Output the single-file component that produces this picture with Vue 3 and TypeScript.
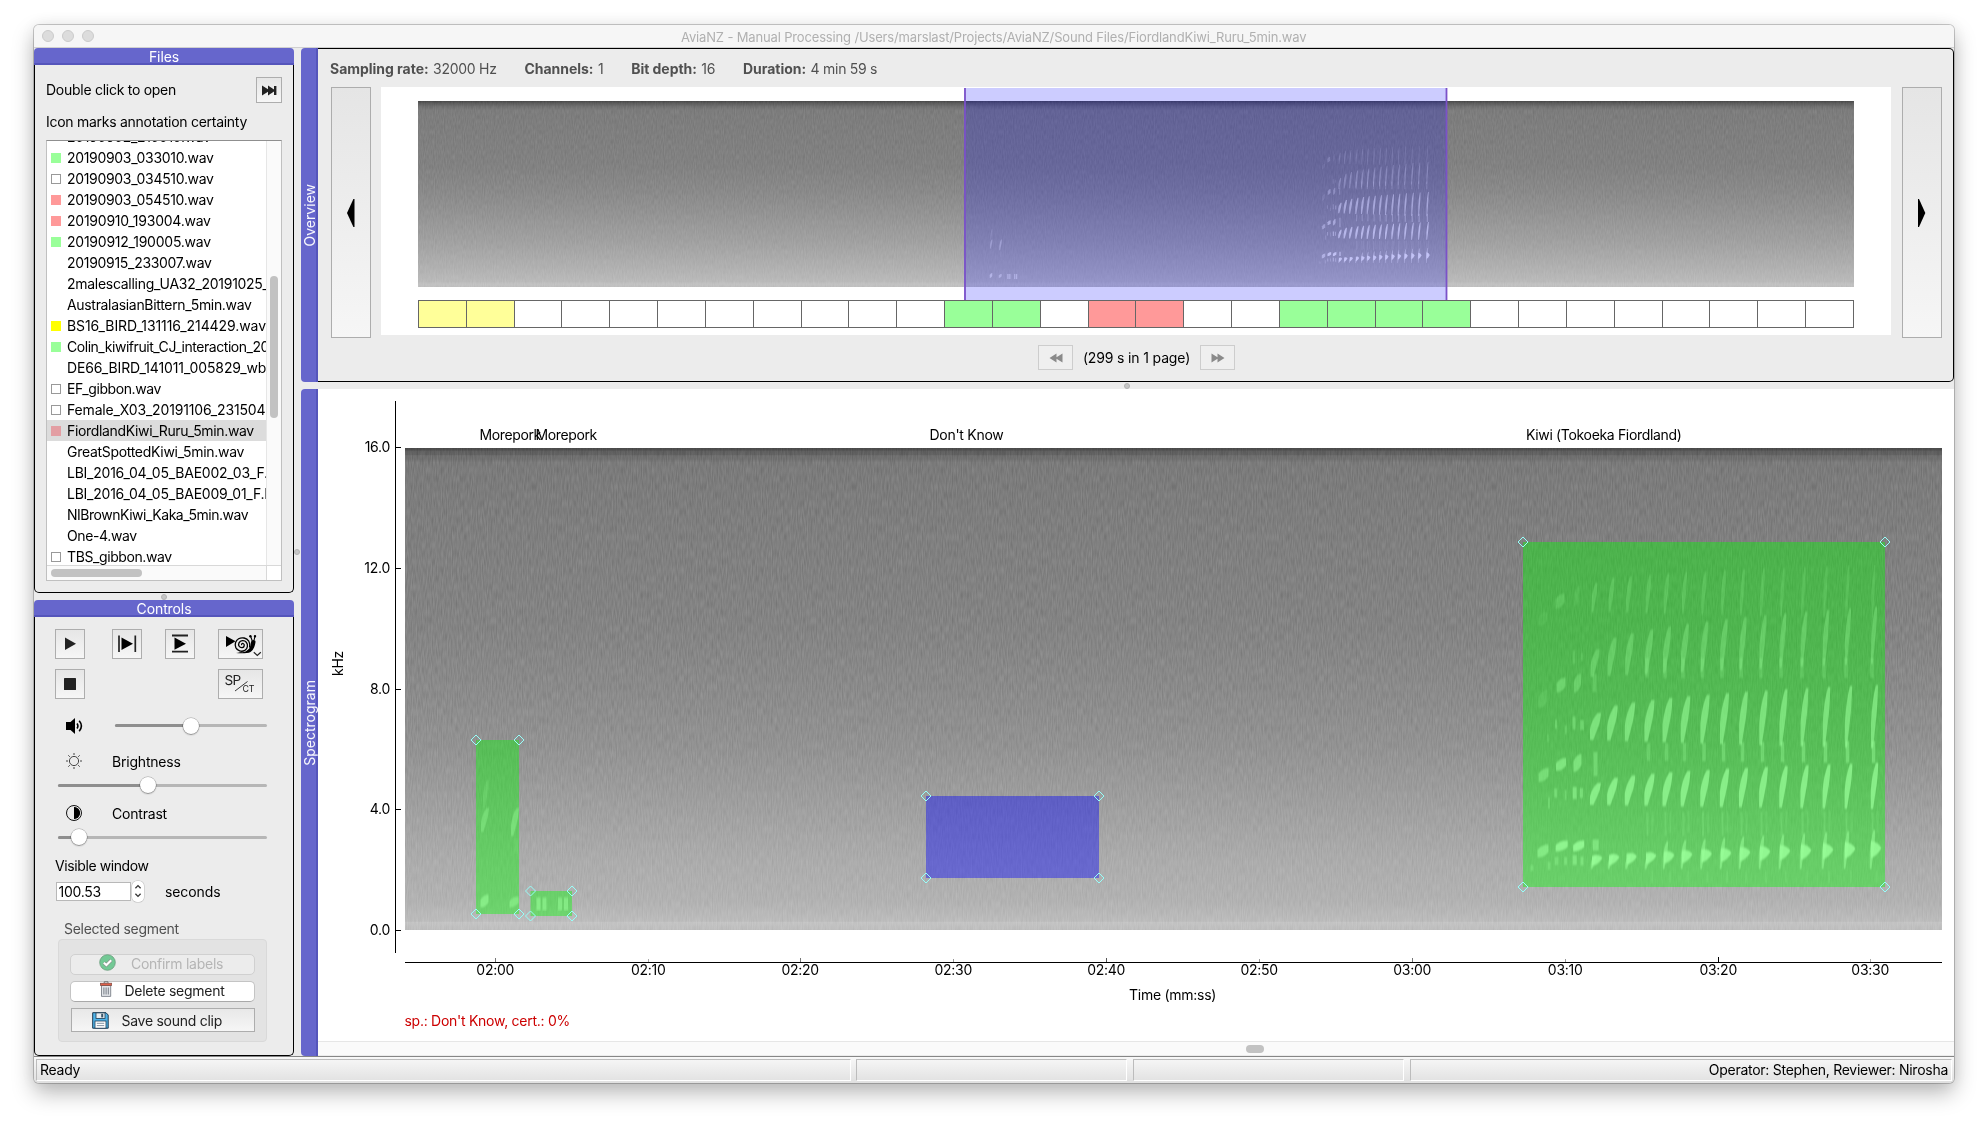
<script setup lang="ts">
type Mark = 'green' | 'empty' | 'red' | 'yellow' | 'none'
interface FileRow { name: string; mark: Mark; selected?: boolean; track?: number }

// track: letter spacing of a row in px, where it differs from the window's
const files: FileRow[] = [
  { name: '20190902_210010.wav', mark: 'none', track: -0.34 },
  { name: '20190903_033010.wav', mark: 'green', track: -0.32 },
  { name: '20190903_034510.wav', mark: 'empty', track: -0.32 },
  { name: '20190903_054510.wav', mark: 'red', track: -0.32 },
  { name: '20190910_193004.wav', mark: 'red', track: -0.24 },
  { name: '20190912_190005.wav', mark: 'green', track: -0.24 },
  { name: '20190915_233007.wav', mark: 'none' },
  { name: '2malescalling_UA32_20191025_2100.wav', mark: 'none', track: -0.28 },
  { name: 'AustralasianBittern_5min.wav', mark: 'none', track: -0.32 },
  { name: 'BS16_BIRD_131116_214429.wav', mark: 'yellow', track: -0.08 },
  { name: 'Colin_kiwifruit_CJ_interaction_2019.wav', mark: 'green', track: -0.46 },
  { name: 'DE66_BIRD_141011_005829_wb.wav', mark: 'none', track: -0.12 },
  { name: 'EF_gibbon.wav', mark: 'empty', track: -0.42 },
  { name: 'Female_X03_20191106_231504.wav', mark: 'empty', track: -0.16 },
  { name: 'FiordlandKiwi_Ruru_5min.wav', mark: 'red', selected: true, track: -0.34 },
  { name: 'GreatSpottedKiwi_5min.wav', mark: 'none' },
  { name: 'LBI_2016_04_05_BAE002_03_F.wav', mark: 'none', track: -0.24 },
  { name: 'LBI_2016_04_05_BAE009_01_F.F.wav', mark: 'none', track: -0.24 },
  { name: 'NIBrownKiwi_Kaka_5min.wav', mark: 'none', track: -0.48 },
  { name: 'One-4.wav', mark: 'none', track: -0.38 },
  { name: 'TBS_gibbon.wav', mark: 'empty', track: -0.4 },
]

const meta = [
  { key: 'Sampling rate:', value: '32000 Hz' },
  { key: 'Channels:', value: '1' },
  { key: 'Bit depth:', value: '16' },
  { key: 'Duration:', value: '4 min 59 s' },
]

// Certainty of each ten-second block in the overview strip
const blockColour: Record<number, string> = {
  0: '#ffff99', 1: '#ffff99', 11: '#99ff99', 12: '#99ff99', 14: '#ff9999', 15: '#ff9999',
  18: '#99ff99', 19: '#99ff99', 20: '#99ff99', 21: '#99ff99',
}
const blockEdge = (i: number) => Math.round(418 + i * 47.83)
const blocks = Array.from({ length: 30 }, (_, i) => ({
  x: blockEdge(i) + 0.5,
  w: blockEdge(i + 1) - blockEdge(i),
  fill: blockColour[i] ?? '#fff',
}))

const freqTicks = [
  { y: 447.5, label: '16.0' }, { y: 568.5, label: '12.0' }, { y: 689.5, label: '8.0' },
  { y: 809.5, label: '4.0' }, { y: 930.5, label: '0.0' },
]
const timeTicks = [
  ['02:00', 4, '#777'], ['02:10', 3, '#aaa'], ['02:20', 4, '#777'], ['02:30', 3, '#999'], ['02:40', 4, '#555'],
  ['02:50', 3, '#999'], ['03:00', 4, '#777'], ['03:10', 3, '#999'], ['03:20', 5, '#000'], ['03:30', 3, '#aaa'],
].map(([label, h, c], i) => ({ label: label as string, h: h as number, c: c as string, x: Math.floor(495.2 + i * 152.85) + 0.5 }))

const segments = [
  { name: 'Morepork', tx: 479.5, len: 61.5, x: 476, y: 740, w: 43, h: 174, fill: '#00ff00' },
  { name: 'Morepork', tx: 535.5, len: 61.5, x: 530.5, y: 891, w: 41.5, h: 25, fill: '#00ff00' },
  { name: "Don't Know", tx: 929.5, len: 74, x: 926, y: 796, w: 173, h: 82, fill: '#0000ff' },
  { name: 'Kiwi (Tokoeka Fiordland)', tx: 1526, len: 155.5, x: 1523, y: 542, w: 362, h: 345, fill: '#00ff00' },
]
const corners = (s: { x: number; y: number; w: number; h: number }) =>
  [[s.x, s.y], [s.x + s.w, s.y], [s.x, s.y + s.h], [s.x + s.w, s.y + s.h]]
    .map(([x, y]) => `M${x - 5} ${y}L${x} ${y - 5}L${x + 5} ${y}L${x} ${y + 5}Z`).join('')

interface Stroke { d: string; o: number }
// A swept note: upright narrow foot, fuller shoulder leaning right
const sliver = (x: number, y1: number, y2: number, w: number, o: number): Stroke => {
  const h = y2 - y1
  const l = x - w / 2
  const r = x + w / 2
  return {
    d: `M${l} ${y2}L${l} ${y1 + 0.6 * h}Q${l + 0.15 * w} ${y1 + 0.25 * h} ${r - 0.3 * w} ${y1}L${r} ${y1}Q${r - 0.05 * w} ${y1 + 0.35 * h} ${r - 0.35 * w} ${y1 + 0.62 * h}L${l + 0.3 * w} ${y2}Z`,
    o,
  }
}
const blob = (x: number, y: number, w: number, h: number, o: number): Stroke => ({
  d: `M${x - w / 2} ${y + h / 2}L${x - w / 2} ${y - h * 0.1}Q${x - w * 0.1} ${y - h / 2} ${x + w / 2} ${y - h / 2}L${x + w / 2} ${y + h * 0.1}Q${x + w * 0.1} ${y + h / 2} ${x - w / 2} ${y + h / 2}Z`,
  o,
})
const bar = (x: number, y: number, w: number, h: number, o: number): Stroke => ({ d: `M${x - w / 2} ${y - h / 2}h${w}v${h}h${-w}Z`, o })

const syllables = [1595, 1612, 1629.5, 1649, 1667, 1685, 1704.5, 1724, 1743, 1763, 1783, 1804, 1826, 1848, 1874]
const strokes: Stroke[] = []
syllables.forEach((x, i) => {
  const p = i / (syllables.length - 1)
  const at = (a: number, b: number) => a + (b - a) * p
  const q = Math.sqrt(p)
  // fundamental
  strokes.push({ d: `M${x - 3} ${at(856, 841)}Q${x + 4} ${at(853, 842)} ${x + 7.5} ${at(858, 848)}Q${x + 3} ${at(865, 856)} ${x - 3} ${at(866, 858)}Z`, o: 0.85 })
  strokes.push(sliver(x - 1.5, i < 4 ? 855 : at(846, 830), 869, 5.5, 0.55))
  // harmonics
  strokes.push(sliver(x + 0.5, 783 - 20 * q, at(805, 809), at(11, 7.5), 0.72))
  strokes.push(sliver(x + 0.5, 713 - 28 * q, at(740, 748), at(11, 7), 0.58))
  strokes.push(sliver(x, 649 - 42 * q, at(677, 664), at(9, 6), 0.32))
  strokes.push(sliver(x - 0.5, 583 - 18 * q, at(612, 618), at(6, 4), at(0.24, 0.16)))
  if (i > 2) {
    strokes.push(bar(x - 0.5, 752, 3.5, at(16, 22), at(0.22, 0.45)))
    strokes.push(bar(x - 1.5, 824, 2, 24, 0.2))
    strokes.push(bar(x + 3.5, 822, 2, 22, 0.13))
    strokes.push(bar(x + 3, 877, 1.6, 12, 0.16))
    strokes.push(bar(x - 2, at(668, 668), 3.5, 20, 0.22))
  }
})
strokes.push(
  blob(1543.5, 775, 10, 14, 0.45), blob(1561, 764.5, 10, 13, 0.6), blob(1577.5, 763, 8, 18, 0.55), bar(1595.5, 764, 4, 24, 0.38),
  blob(1543, 851, 11, 13, 0.6), blob(1561.7, 846, 12, 11, 0.8), blob(1578.7, 846, 11, 11, 0.85), bar(1595.7, 845, 6, 11, 0.5),
  bar(1555.7, 793, 3, 9, 0.4), bar(1565.6, 795, 2, 10, 0.3), bar(1574.7, 793, 4, 12, 0.55), bar(1581.4, 793, 3, 10, 0.45),
  bar(1556.5, 861, 4, 8, 0.35), bar(1565.6, 861, 3, 8, 0.35), bar(1574.7, 860, 4, 10, 0.5), bar(1582, 861, 3, 9, 0.45),
  bar(1549, 803, 2, 11, 0.3), bar(1549, 866, 3, 8, 0.3), bar(1532, 868, 3, 6, 0.3),
  blob(1561, 685, 9, 15, 0.4), blob(1577.5, 683, 7, 19, 0.34), blob(1543, 699, 9, 18, 0.15), bar(1594.5, 683, 4, 18, 0.22),
  blob(1560, 601, 9, 15, 0.24), blob(1577, 596, 5, 20, 0.12), blob(1543, 619, 9, 14, 0.1),
  bar(1556, 724, 2, 9, 0.35), bar(1565.7, 730, 2, 9, 0.25), bar(1574, 723, 3, 13, 0.38), bar(1582, 725, 3.5, 10, 0.38),
  bar(1574, 657, 2.5, 13, 0.18), bar(1582, 657, 2.5, 8, 0.15), bar(1548, 738, 1.5, 8, 0.25),
)
// Morepork calls
strokes.push(
  sliver(485, 808, 832, 8, 0.38), sliver(486, 780, 808, 6, 0.18), sliver(515, 808, 836, 8, 0.42), bar(516, 846, 4, 14, 0.1),
  blob(484.5, 901, 8, 13, 0.6), blob(514, 902, 9, 11, 0.5),
  bar(538.5, 904, 4, 13, 0.6), bar(544.5, 904, 4, 13, 0.55), bar(560, 904, 4, 13, 0.5), bar(566, 904, 4, 13, 0.55),
)
</script>

<template>
  <div class="desktop">
    <div class="window">
      <header class="titlebar">
        <span class="lights"><i /><i /><i /></span>
        <span class="title">AviaNZ - Manual Processing /Users/marslast/Projects/AviaNZ/Sound Files/FiordlandKiwi_Ruru_5min.wav</span>
      </header>

      <div class="main">
        <div class="side">
          <section class="dock files">
            <h2 class="dock-title">Files</h2>
            <div class="dock-body">
              <div class="open-row">
                <span>Double click to open</span>
                <button class="tool ff">
                  <svg width="15" height="11" viewBox="0 0 15 11"><path d="M0 .5L6 4.3V.5L12 4.6V1H14.4V10H12V6.4L6 10.5V6.7L0 10.5Z" fill="#222" /></svg>
                </button>
              </div>
              <p class="hint">Icon marks annotation certainty</p>
              <div class="list">
                <div class="rows">
                  <div v-for="f in files" :key="f.name" class="row" :class="{ selected: f.selected }">
                    <i class="mark" :class="f.mark" />
                    <span :style="{ letterSpacing: `${f.track ?? -0.3}px` }">{{ f.name }}</span>
                  </div>
                </div>
                <div class="vbar"><i /></div>
                <div class="hbar"><i /></div>
                <div class="corner" />
              </div>
            </div>
          </section>

          <div class="split"><i /></div>

          <section class="dock controls">
            <h2 class="dock-title">Controls</h2>
            <div class="dock-body">
              <div class="buttons">
                <button class="tool b1"><svg width="28" height="28" viewBox="0 0 28 28"><path d="M9 7.5L20 13.7L9 20Z" fill="#222" /></svg></button>
                <button class="tool b2"><svg width="28" height="28" viewBox="0 0 28 28"><path d="M6 5.5V22M22.3 5.5V22" stroke="#222" stroke-width="1.7" /><path d="M8.5 7.5L20 13.7L8.5 20Z" /></svg></button>
                <button class="tool b3"><svg width="28" height="28" viewBox="0 0 28 28"><path d="M6 5.5H22M6 21.7H22" stroke="#222" stroke-width="1.8" /><path d="M8.5 7.5L20 13.7L8.5 19.8Z" /></svg></button>
                <button class="tool b4">
                  <svg width="43" height="28" viewBox="0 0 43 28">
                    <path d="M7 6L16.5 11.3L7 17Z" />
                    <path d="M17 22.9C22 22.6 29 20.5 30.6 18C32 15.6 31.4 12.6 32.5 10.8C33.6 9.4 36.8 9.8 36.5 12C36.2 14.6 35 20 31.5 21.9C28.4 23.6 21 23.5 17 22.9Z" />
                    <path d="M33.2 10.8L31.6 6.2M35 10.5L36 6.2" stroke="#000" stroke-width="1.1" />
                    <circle cx="31.4" cy="6.2" r="1.2" /><circle cx="36" cy="6.2" r="1.2" />
                    <circle cx="23.3" cy="14.8" r="7.4" fill="#ececec" />
                    <path d="M22.9 15C22.2 14.4 22.9 13 24.2 13.5C26 14.3 25.4 17.3 23.2 17.6C20.4 17.9 18.9 15.2 20 12.9C21.4 10.2 25.3 9.9 27.3 12.2C29.3 14.6 28.7 18.6 25.8 20.4C22.6 22.2 18.4 20.9 16.8 17.6C15.4 14.3 16.6 10.4 19.6 8.7C23 6.9 27.6 7.8 29.8 11.2C31 13.4 31.2 15.6 30.6 17.6" fill="none" stroke="#000" stroke-width="1.3" />
                    <path d="M34.8 22.3L38.3 25.5L41.8 22.3" fill="none" stroke="#222" stroke-width="1.2" />
                  </svg>
                </button>
                <button class="tool b5"><svg width="28" height="28" viewBox="0 0 28 28"><rect x="8" y="8" width="12" height="12" rx=".6" fill="#222" /></svg></button>
                <button class="tool b6">
                  <svg width="43" height="28" viewBox="0 0 43 28">
                    <text x="5.6" y="15.4" font-size="13.6" fill="#222" textLength="16.4">SP</text>
                    <path d="M16 21L28.5 11.5" stroke="#222" stroke-width=".9" />
                    <text x="23.6" y="22.3" font-size="8.8" fill="#222" textLength="11.6">CT</text>
                  </svg>
                </button>
              </div>

              <div class="volume">
                <svg width="17" height="18" viewBox="0 0 17 18"><path d="M0 5H4.5L9 1V17L4.5 13H0Z" /><path d="M11 6.6Q12.8 9 11 11.4M13.2 3.8Q17.6 9 13.2 14.2" fill="none" stroke="#000" stroke-width="1.6" /></svg>
                <div class="slider vol"><b /><i /></div>
              </div>
              <div class="named">
                <svg width="18" height="18" viewBox="0 0 18 18" fill="none" stroke="#444" stroke-width="1"><circle cx="9" cy="9" r="4.6" /><path d="M9 1V3M9 15V17M1 9H3M15 9H17M3.3 3.3L4.8 4.8M13.2 13.2L14.7 14.7M3.3 14.7L4.8 13.2M13.2 4.8L14.7 3.3" /></svg>
                <span>Brightness</span>
              </div>
              <div class="slider bri"><b /><i /></div>
              <div class="named con-name">
                <svg width="18" height="18" viewBox="0 0 18 18"><circle cx="9" cy="9" r="7.5" fill="none" stroke="#111" stroke-width="1" /><path d="M9 3.2A5.8 5.8 0 0 1 9 14.8Z" /><path d="M9 2.9A6.1 6.1 0 0 1 9 15.1Z" /></svg>
                <span>Contrast</span>
              </div>
              <div class="slider con"><b /><i /></div>

              <p class="vis">Visible window</p>
              <div class="spin-row">
                <span class="spin-input">100.53</span>
                <span class="spinner"><svg width="12" height="20" viewBox="0 0 12 20" fill="none" stroke="#333" stroke-width="1.3"><path d="M3.4 7.2L6 4.6L8.6 7.2M3.4 12.8L6 15.4L8.6 12.8" /></svg></span>
                <span class="unit">seconds</span>
              </div>

              <p class="group-name">Selected segment</p>
              <div class="group">
                <button class="pill off">
                  <svg width="17" height="17" viewBox="0 0 17 17"><circle cx="8.5" cy="8.5" r="7.8" fill="#73c995" stroke="#6a9c7c" stroke-width=".8" /><path d="M4.8 8.7L7.4 11L12.2 6.2" fill="none" stroke="#8a8f8c" stroke-width="3.4" /><path d="M4.8 8.7L7.4 11L12.2 6.2" fill="none" stroke="#fff" stroke-width="2.1" /></svg>
                  <span>Confirm labels</span>
                </button>
                <button class="pill del">
                  <svg width="12" height="17" viewBox="0 0 12 17"><path d="M1.5 4.5H10.7V15.4H1.5Z" fill="#e3e6ea" stroke="#7b8088" stroke-width=".9" /><path d="M3.9 6.5V13.5M6.1 6.5V13.5M8.3 6.5V13.5" stroke="#777d86" stroke-width="1" /><rect x=".4" y="2.2" width="11.4" height="2.3" fill="#e0604a" stroke="#7a4a42" stroke-width=".7" /><path d="M4.2 2V.8H8V2" fill="none" stroke="#666" stroke-width=".9" /></svg>
                  <span>Delete segment</span>
                </button>
                <button class="flat">
                  <svg width="17" height="17" viewBox="0 0 17 17"><path d="M.7 .7H14L16.2 3V16.2H.7Z" fill="#4fb4ea" stroke="#1d3a52" stroke-width="1" /><rect x="4" y=".9" width="9" height="5.6" fill="#e8eef2" stroke="#1d3a52" stroke-width=".8" /><rect x="9.2" y="1.8" width="2" height="3.6" fill="#3a5468" /><rect x="3" y="9" width="11" height="7.2" fill="#fff" stroke="#1d3a52" stroke-width=".8" /><path d="M4.8 11.3H12.2M4.8 13.6H12.2" stroke="#789" stroke-width=".9" /></svg>
                  <span>Save sound clip</span>
                </button>
              </div>
            </div>
          </section>
        </div>

        <div class="vsplit"><i /></div>

        <div class="content">
          <section class="pane overview">
            <div class="tab"><span>Overview</span></div>
            <div class="pane-body">
              <div class="meta">
                <span v-for="m in meta" :key="m.key"><b>{{ m.key }}</b> {{ m.value }}</span>
              </div>
              <div class="strip">
                <button class="side-btn"><svg width="8" height="28" viewBox="0 0 8 28"><path d="M7.5 0V28H6.4L0 14L6.4 0Z" /></svg></button>
                <svg class="over-plot" width="1510" height="248" viewBox="381 87 1510 248">
                  <defs>
                    <linearGradient id="ovg" x1="0" y1="0" x2="0" y2="1">
                      <stop offset="0" stop-color="#474747" /><stop offset=".012" stop-color="#5c5c5c" /><stop offset=".03" stop-color="#707070" />
                      <stop offset=".05" stop-color="#7c7c7c" /><stop offset=".35" stop-color="#818181" /><stop offset=".5" stop-color="#8a8a8a" />
                      <stop offset=".75" stop-color="#a0a0a0" /><stop offset=".9" stop-color="#b1b1b1" /><stop offset=".97" stop-color="#bababa" /><stop offset=".985" stop-color="#c2c2c2" /><stop offset="1" stop-color="#bfbfbf" />
                    </linearGradient>
                    <filter id="ovn" x="0" y="0" width="100%" height="100%" color-interpolation-filters="sRGB">
                      <feTurbulence type="fractalNoise" baseFrequency=".9 .2" numOctaves="1" seed="4" />
                      <feColorMatrix values="1 0 0 0 0  1 0 0 0 0  1 0 0 0 0  0 0 0 0 1" />
                    </filter>
                  </defs>
                  <rect x="418" y="101" width="1436" height="186" fill="url(#ovg)" />
                  <rect class="noise faint" x="418" y="101" width="1436" height="186" filter="url(#ovn)" />
                  <g transform="translate(838.8 -72.4) scale(.3141 .386)">
                    <path v-for="(s, i) in strokes" :key="i" :d="s.d" fill="#fff" :opacity="s.o" />
                  </g>
                  <rect x="964" y="88" width="483" height="212" fill="#0000ff" fill-opacity=".2" />
                  <path d="M965 88V300M1446.5 88V300" stroke="#7b52c8" stroke-width="1.8" />
                  <g stroke="#666">
                    <rect v-for="b in blocks" :key="b.x" :x="b.x" y="300.5" :width="b.w" height="27" :fill="b.fill" />
                  </g>
                </svg>
                <button class="side-btn right"><svg width="8" height="28" viewBox="0 0 8 28"><path d="M0 0H1L7.3 14L1 28H0Z" /></svg></button>
              </div>
              <div class="pager">
                <button class="tool page"><svg width="14" height="10" viewBox="0 0 14 10"><path d="M13.5 .5V9.5L7.5 5.8V9.5L.5 5L7.5 .5V4.2Z" fill="#8a8a8a" /></svg></button>
                <span>(299 s in 1 page)</span>
                <button class="tool page"><svg width="14" height="10" viewBox="0 0 14 10"><path d="M.5 .5V9.5L6.5 5.8V9.5L13.5 5L6.5 .5V4.2Z" fill="#8a8a8a" /></svg></button>
              </div>
            </div>
          </section>

          <div class="split wide"><i /></div>

          <section class="pane spectro">
            <div class="tab"><span>Spectrogram</span></div>
            <div class="spec-body">
              <svg class="spec-plot" width="1635" height="652" viewBox="318 389 1635 652">
                <defs>
                  <linearGradient id="spg" x1="0" y1="0" x2="0" y2="1">
                    <stop offset="0" stop-color="#4a4a4a" /><stop offset=".004" stop-color="#4e4e4e" /><stop offset=".0065" stop-color="#5e5e5e" /><stop offset=".014" stop-color="#626262" />
                    <stop offset=".016" stop-color="#6e6e6e" /><stop offset=".023" stop-color="#707070" /><stop offset=".03" stop-color="#7a7a7a" /><stop offset=".2" stop-color="#7f7f7f" />
                    <stop offset=".37" stop-color="#838383" /><stop offset=".5" stop-color="#8a8a8a" /><stop offset=".62" stop-color="#929292" /><stop offset=".75" stop-color="#a0a0a0" />
                    <stop offset=".86" stop-color="#acacac" /><stop offset=".94" stop-color="#b2b2b2" /><stop offset=".982" stop-color="#bcbcbc" /><stop offset=".984" stop-color="#c4c4c4" /><stop offset="1" stop-color="#bebebe" />
                  </linearGradient>
                  <filter id="spn" x="0" y="0" width="100%" height="100%" color-interpolation-filters="sRGB">
                    <feTurbulence type="fractalNoise" baseFrequency=".8 .12" numOctaves="1" seed="9" />
                    <feColorMatrix values="1 0 0 0 0  1 0 0 0 0  1 0 0 0 0  0 0 0 0 1" />
                  </filter>
                  <filter id="soft" x="0" y="0" width="100%" height="100%"><feGaussianBlur stdDeviation=".5 1" /></filter>
                </defs>
                <rect x="405" y="448" width="1537" height="482" fill="url(#spg)" />
                <rect class="noise" x="405" y="448" width="1537" height="482" filter="url(#spn)" />
                <g filter="url(#soft)">
                  <path v-for="(s, i) in strokes" :key="i" :d="s.d" fill="#fff" :opacity="s.o" />
                </g>
                <g v-for="s in segments" :key="s.x">
                  <rect :x="s.x" :y="s.y" :width="s.w" :height="s.h" :fill="s.fill" fill-opacity=".4" />
                  <path :d="corners(s)" fill="none" stroke="#96fffa" stroke-width="1" />
                  <text :x="s.tx" y="440" :textLength="s.len">{{ s.name }}</text>
                </g>
                <path d="M395.5 401V953M405 962.5H1942" stroke="#000" />
                <g v-for="t in freqTicks" :key="t.label">
                  <path :d="`M395 ${t.y}H401`" stroke="#000" />
                  <text x="390" :y="t.y + 4.7" text-anchor="end">{{ t.label }}</text>
                </g>
                <g v-for="t in timeTicks" :key="t.label">
                  <path :d="`M${t.x} 962V${962 - t.h}`" :stroke="t.c" />
                  <text :x="t.x - 0.3" y="975" text-anchor="middle">{{ t.label }}</text>
                </g>
                <text x="1129" y="1000">Time (mm:ss)</text>
                <text transform="translate(342.7 676) rotate(-90)">kHz</text>
                <text x="404.5" y="1026" class="status-text">sp.: Don't Know, cert.: 0%</text>
              </svg>
              <div class="scroll"><i /></div>
            </div>
          </section>
        </div>
      </div>

      <footer class="status">
        <span class="cell c1">Ready</span>
        <span class="cell c2" />
        <span class="cell c3" />
        <span class="cell c4">Operator: Stephen, Reviewer: Nirosha</span>
      </footer>
    </div>
  </div>
</template>

<style>
body { margin: 0; background: #fff; }
</style>

<style scoped>
.desktop, .desktop * { box-sizing: border-box; }
.desktop {
  width: 1988px; height: 1125px; padding: 25px 0 0 34px; overflow: hidden; background: #fff;
  font: 14px/18px Inter, "Open Sans", sans-serif; letter-spacing: -0.27px; color: #000;
}
.window {
  width: 1920px; height: 1058px; display: flex; flex-direction: column; background: #ececec; border-radius: 5px;
  box-shadow: 0 0 0 1px rgba(0, 0, 0, .2), 0 10px 22px rgba(0, 0, 0, .28), 0 0 16px rgba(0, 0, 0, .06); overflow: hidden;
}
h2, p { margin: 0; font-weight: 400; font-size: inherit; }
button { font: inherit; letter-spacing: inherit; color: inherit; padding: 0; margin: 0; }
svg { display: block; flex: none; }
svg text { font-family: Inter, "Open Sans", sans-serif; }

.titlebar { height: 23px; display: flex; align-items: center; background: #f6f6f6; border-bottom: 1px solid #d0d0d0; flex: none; }
.lights { display: flex; gap: 8px; padding-left: 8px; width: 647px; }
.lights i { width: 12px; height: 12px; border-radius: 50%; background: #dcdcdc; border: 1px solid #cacaca; }
.title { font-size: 13px; line-height: 22px; letter-spacing: -0.155px; color: #b0b0b0; white-space: nowrap; padding-top: 2px; }

.main { display: flex; height: 1008px; flex: none; }
.side { width: 260px; display: flex; flex-direction: column; }
.dock { display: flex; flex-direction: column; }
.files { height: 545px; }
.controls { height: 456px; }
.dock-title { height: 17px; line-height: 17px; text-align: center; color: #fff; background: #6666cc; border-bottom: 2px solid #5555bb; border-radius: 4px 4px 0 0; letter-spacing: -0.1px; }
.dock-body { flex: 1; border: 1px solid #000; border-top: 0; border-radius: 0 0 5px 5px; background: #ececec; }
.split { height: 7px; display: flex; justify-content: center; align-items: center; }
.split i, .vsplit i { width: 6px; height: 6px; border-radius: 50%; background: #c6c6c6; border: 1px solid #b2b2b2; }
.split.wide { padding-right: 2px; }
.vsplit { width: 7px; display: flex; align-items: center; }

.open-row { display: flex; justify-content: space-between; align-items: center; height: 26px; margin: 12px 11px 0; }
.tool { display: flex; align-items: center; justify-content: center; width: 30px; height: 30px; border: 1px solid #adadad; background: linear-gradient(#e6e6e6, #f6f6f6); }
.tool.ff { width: 26px; height: 26px; }
.hint { margin: 10px 11px 0; height: 18px; line-height: 18px; white-space: nowrap; }
.list {
  margin: 9px 11px 0; width: 236px; height: 441px; border: 1px solid #c0c0c0; border-top-color: #8f8f8f; background: #fff;
  display: grid; grid-template: 424px 15px / 219px 15px;
}
.rows { overflow: hidden; }
.row { height: 21px; display: flex; align-items: center; white-space: nowrap; padding-left: 4px; }
.row:first-child { margin-top: -15px; }
.row.selected { background: #dcdcdc; }
.row span { padding-left: 6px; padding-top: 1px; }
.mark { width: 10px; height: 10px; flex: none; }
.green { background: #99ff99; }
.red { background: #ff9999; }
.selected .red { background: #e39ea3; }
.yellow { background: #ffff00; }
.empty { border: 1px solid #999; }
.vbar { border-left: 1px solid #e6e6e6; background: #fafafa; padding: 135px 0 0 3px; }
.vbar i { display: block; width: 8px; height: 142px; border-radius: 4px; background: #c2c2c2; }
.hbar { border-top: 1px solid #d8d8d8; background: #fafafa; padding: 3px 0 0 4px; }
.hbar i { display: block; width: 91px; height: 8px; border-radius: 4px; background: #c2c2c2; }
.corner { border: 1px solid #d8d8d8; border-right: 0; border-bottom: 0; background: #fff; }

.buttons { display: grid; grid-template-columns: 57px 53px 53px 45px; row-gap: 10px; margin: 12px 0 0 20px; }
.tool.b4, .tool.b6 { width: 45px; }
.b6 { grid-column: 4; }
.volume { display: flex; align-items: center; height: 18px; margin: 18px 0 0 30.5px; }
.slider { position: relative; height: 18px; margin-left: 23px; width: 209px; display: flex; align-items: center; }
.slider::before { content: ""; flex: 1; height: 3px; border-radius: 2px; background: #b6b6b6; }
.slider b { position: absolute; left: 0; top: 7.5px; height: 3px; border-radius: 2px; background: #8e8e8e; }
.slider i { position: absolute; top: 1px; width: 16px; height: 16px; border-radius: 50%; background: #fff; box-shadow: 0 0 0 .5px rgba(0, 0, 0, .3), 0 1px 1.5px rgba(0, 0, 0, .3); }
.vol { width: 152px; margin-left: 32.5px; margin-top: -1px; }
.vol b { width: 75px; }
.vol i { left: 68px; }
.bri b { width: 90px; }
.bri i { left: 82px; }
.con b { width: 20px; }
.con i { left: 13px; }
.named { display: flex; align-items: center; height: 18px; margin: 17px 0 0 30px; }
.named span { margin-left: 29px; padding-top: 2px; letter-spacing: -0.2px; }
.bri { margin-top: 6px; }
.con-name { margin-top: 10px; }
.con { margin-top: 6px; }
.vis { margin: 10px 0 0 20px; line-height: 18px; padding-top: 1px; letter-spacing: -0.4px; }
.spin-row { display: flex; align-items: center; height: 21px; margin: 6px 0 0 21px; }
.spin-input { width: 75px; height: 19px; border: 1px solid #b8b8b8; background: #fff; padding-left: 1.5px; line-height: 18px; }
.spinner { width: 12px; height: 21px; margin-left: 1px; border-radius: 5px; background: #fff; box-shadow: 0 0 0 .5px #bbb; }
.unit { margin-left: 21px; letter-spacing: -0.1px; }
.group-name { margin: 18px 0 0 29px; color: #505050; line-height: 18px; height: 18px; }
.group { margin: 1px 0 0 23px; width: 209px; height: 103px; background: #e3e3e3; border: 1px solid #d9d9d9; border-radius: 4px; padding: 14px 0 0 11px; }
.group button { display: flex; width: 185px; color: #222; }
.pill { height: 21px; border: 1px solid #c4c4c4; border-bottom-color: #a9a9a9; border-radius: 5px; background: #fff; margin-bottom: 6px; line-height: 17px; }
.pill.off { background: #ececec; border-color: #d0d0d0; }
.pill.off span { color: #b5b5b5; margin-left: 15px; }
.pill.off svg { margin: -1.5px 0 0 28px; }
.del svg { margin: -1px 0 0 28.5px; }
.del span { margin-left: 13px; }
.group .flat { height: 24px; width: 184px; margin-left: .5px; border: 1px solid #adadad; background: linear-gradient(#e8e8e8, #f6f6f6); line-height: 24px; }
.flat svg { margin: 3px 0 0 20.5px; }
.flat span { margin-left: 12.5px; }

.content { width: 1653px; display: flex; flex-direction: column; }
.pane { display: flex; }
.overview { height: 334px; }
.spectro { height: 667px; }
.tab { width: 17px; flex: none; background: #6666cc; border-right: 2px solid #5555bb; border-radius: 4px 0 0 4px; display: flex; align-items: center; justify-content: center; }
.tab span { writing-mode: vertical-rl; transform: rotate(180deg); color: #fff; line-height: 15px; letter-spacing: 0; padding-right: 2px; opacity: .95; }
.pane-body { flex: 1; border: 1px solid #000; border-left: 0; border-radius: 0 5px 5px 0; background: #ececec; }
.meta { display: flex; gap: 27.8px; height: 38px; align-items: center; padding: 1px 0 0 12px; color: #505050; }
.meta b { letter-spacing: -0.03px; margin-right: .8px; font-weight: 700; }
.strip { display: flex; height: 251px; padding-left: 13px; }
.side-btn { width: 40px; height: 251px; border: 1px solid #adadad; background: linear-gradient(#e5e5e5, #f6f6f6); display: flex; align-items: center; justify-content: center; }
.over-plot { background: #fff; margin: 0 11px 0 10px; }
.noise { mix-blend-mode: overlay; opacity: .15; }
.faint { opacity: .1; }
.pager { display: flex; align-items: center; height: 25px; margin: 7px 0 0 720px; }
.pager span { width: 127px; text-align: center; letter-spacing: -0.15px; }
.tool.page { width: 35px; height: 25px; border-color: #cdcdcd; background: #efefef; }

.spec-body { flex: 1; background: #fff; display: flex; flex-direction: column; }
.spec-plot { letter-spacing: -0.27px; font-size: 14px; }
.status-text { fill: #cc0000; }
.scroll { height: 15px; border-top: 1px solid #e6e6e6; border-bottom: 1px solid #ececec; background: #fafafa; padding: 3px 0 0 928px; }
.scroll i { display: block; width: 18px; height: 8px; border-radius: 4px; background: #c2c2c2; }

.status { flex: 1; display: flex; border-top: 1px solid #868686; background: linear-gradient(#f8f8f8, #e0e0e0); padding: 2px; }
.cell { border: 1px solid #bcbcbc; border-right-color: #fff; border-bottom-color: #fff; height: 22px; line-height: 19px; white-space: nowrap; }
.c1 { width: 815px; padding-left: 3px; }
.c2 { width: 271px; margin-left: 5px; }
.c3 { width: 271px; margin-left: 6px; }
.c4 { flex: 1; margin-left: 6px; text-align: right; padding-right: 3px; }
</style>
